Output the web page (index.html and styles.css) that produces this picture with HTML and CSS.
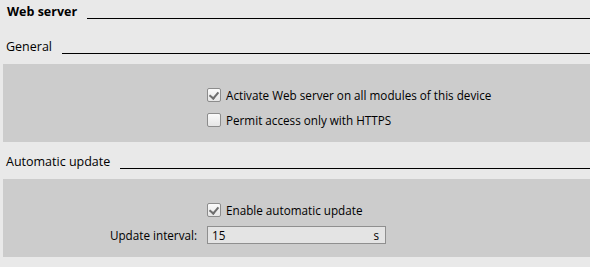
FILE: index.html
```html
<!DOCTYPE html>
<html lang="en">
<head>
  <meta charset="UTF-8" /><meta name="viewport" content="width=device-width, initial-scale=1"/>
  <title>Web server</title>
  <link rel="stylesheet" href="styles.css">
</head>
<body>
  <div class="title main">
    <span class="title-text">Web server</span>
    <span class="rule"></span>
  </div>

  <div class="title sub">
    <span class="title-text">General</span>
    <span class="rule"></span>
  </div>
  <div class="panel">
    <div class="row">
      <span></span>
      <label class="check"><span class="box checked"></span>Activate Web server on all modules of this device</label>
    </div>
    <div class="row">
      <span></span>
      <label class="check"><span class="box"></span>Permit access only with HTTPS</label>
    </div>
  </div>

  <div class="title sub">
    <span class="title-text">Automatic update</span>
    <span class="rule"></span>
  </div>
  <div class="panel">
    <div class="row">
      <span></span>
      <label class="check"><span class="box checked"></span>Enable automatic update</label>
    </div>
    <div class="row">
      <span class="field-label">Update interval:</span>
      <div class="field">
        <span>15</span>
        <span class="unit">s</span>
      </div>
    </div>
  </div>
</body>
</html>
```

FILE: styles.css
```css
* { box-sizing: border-box; margin: 0; padding: 0; }
body {
  font-family: "Open Sans", "Noto Sans", sans-serif;
  font-size: 11.7px;
  color: #000;
  background: #e9e9e9;
  width: 590px;
  height: 267px;
  overflow: hidden;
}

/* Section titles with trailing rule */
.title {
  display: flex;
  align-items: flex-end;
}
.title .rule {
  flex: 1;
  border-bottom: 1px solid #000;
}
.main {
  padding-left: 7px;
  height: 19px;
}
.main .title-text { font-weight: bold; font-size: 12.5px; line-height: 15px; }
.main .rule { margin-left: 10px; }

.sub {
  height: 35px;
  padding-left: 6px;
}
.sub .title-text { font-size: 12.5px; line-height: 15px; }
.sub .rule { margin-left: 10px; }

.panel + .sub { height: 27px; }

/* Grey settings panel */
.panel {
  margin: 10px 0 0 3px;
  background: #cccccc;
  height: 78px;
  padding-top: 18px;
}
.row {
  display: grid;
  grid-template-columns: 194px auto;
  column-gap: 10px;
  align-items: center;
  height: 25px;
}
.check {
  display: flex;
  align-items: center;
  gap: 5px;
}
.box {
  width: 14px;
  height: 14px;
  border: 1px solid #8c8c8c;
  border-radius: 2px;
  background: linear-gradient(#fafafa, #e6e6e6);
  position: relative;
}
.box.checked::after {
  content: "";
  position: absolute;
  left: 3px; top: 1px;
  width: 4px; height: 7px;
  border: solid #6e6e6e;
  border-width: 0 2px 2px 0;
  transform: rotate(40deg);
}
.field-label {
  text-align: right;
}
.field {
  width: 179px;
  height: 18px;
  border: 1px solid #8f8f8f;
  background: #e4e4e4;
  display: flex;
  align-items: center;
  justify-content: space-between;
  padding: 0 6px 0 4px;
}
```
